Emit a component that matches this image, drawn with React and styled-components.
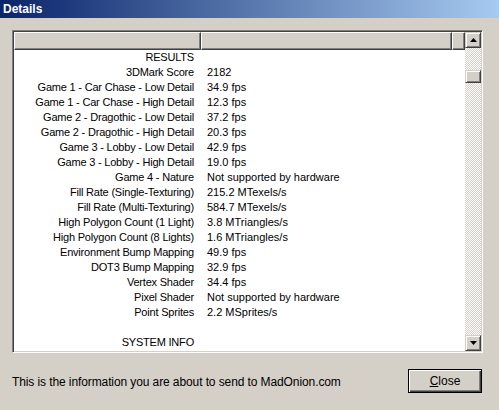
import React from 'react';
import styled, { createGlobalStyle } from 'styled-components';

const GlobalStyle = createGlobalStyle`
  html, body {
    margin: 0;
    padding: 0;
    background: #d4d0c8;
  }
  body {
    font-family: "Liberation Sans", Arial, sans-serif;
    color: #000;
  }
`;

const rows = [
  ['RESULTS', ''],
  ['3DMark Score', '2182'],
  ['Game 1 - Car Chase - Low Detail', '34.9 fps'],
  ['Game 1 - Car Chase - High Detail', '12.3 fps'],
  ['Game 2 - Dragothic - Low Detail', '37.2 fps'],
  ['Game 2 - Dragothic - High Detail', '20.3 fps'],
  ['Game 3 - Lobby - Low Detail', '42.9 fps'],
  ['Game 3 - Lobby - High Detail', '19.0 fps'],
  ['Game 4 - Nature', 'Not supported by hardware'],
  ['Fill Rate (Single-Texturing)', '215.2 MTexels/s'],
  ['Fill Rate (Multi-Texturing)', '584.7 MTexels/s'],
  ['High Polygon Count (1 Light)', '3.8 MTriangles/s'],
  ['High Polygon Count (8 Lights)', '1.6 MTriangles/s'],
  ['Environment Bump Mapping', '49.9 fps'],
  ['DOT3 Bump Mapping', '32.9 fps'],
  ['Vertex Shader', '34.4 fps'],
  ['Pixel Shader', 'Not supported by hardware'],
  ['Point Sprites', '2.2 MSprites/s'],
  ['', ''],
  ['SYSTEM INFO', ''],
];

const Window = styled.div`
  width: 499px;
  height: 410px;
  display: flex;
  flex-direction: column;
  background: #d4d0c8;
  overflow: hidden;
`;

const TitleBar = styled.div`
  height: 18px;
  flex: none;
  display: flex;
  align-items: center;
  padding-left: 3px;
  background: linear-gradient(to right, #0a246a, #a6caf0);
  color: #fff;
  font-weight: bold;
  font-size: 12px;
`;

const Body = styled.div`
  flex: 1;
  display: flex;
  flex-direction: column;
  padding: 12px 16px 0 12px;
`;

const ListFrame = styled.div`
  height: 319px;
  display: flex;
  border: 1px solid;
  border-color: #808080 #fff #fff #808080;
  box-shadow: inset 1px 1px #404040, inset -1px -1px #d4d0c8;
  padding: 1px;
  background: #fff;
`;

const ListArea = styled.div`
  flex: 1;
  display: flex;
  flex-direction: column;
  overflow: hidden;
`;

const HeaderRow = styled.div`
  display: flex;
  height: 18px;
  flex: none;
`;

const HeaderCell = styled.div`
  box-sizing: border-box;
  width: ${p => p.w}px;
  flex: ${p => (p.grow ? 1 : 'none')};
  background: #d4d0c8;
  border: 1px solid;
  border-color: #fff #404040 #404040 #fff;
  box-shadow: inset -1px -1px #808080;
`;

const Row = styled.div`
  display: flex;
  height: 15px;
  align-items: center;
  font-size: 11px;
  line-height: 15px;
  white-space: nowrap;
`;

const Label = styled.div`
  width: 187px;
  box-sizing: border-box;
  padding-right: 7px;
  text-align: right;
  letter-spacing: -0.2px;
`;

const Value = styled.div`
  padding-left: 6px;
`;

const ScrollBar = styled.div`
  width: 16px;
  flex: none;
  display: flex;
  flex-direction: column;
  background-color: #d4d0c8;
  background-image: repeating-conic-gradient(#fff 0 25%, #d4d0c8 0 50%);
  background-size: 2px 2px;
`;

const ScrollButton = styled.div`
  box-sizing: border-box;
  width: 16px;
  height: ${p => p.h || 16}px;
  margin-top: ${p => p.mt || 0}px;
  flex: none;
  display: flex;
  align-items: center;
  justify-content: center;
  background: #d4d0c8;
  border: 1px solid;
  border-color: #d4d0c8 #404040 #404040 #d4d0c8;
  box-shadow: inset 1px 1px #fff, inset -1px -1px #808080;
`;

const Spacer = styled.div`
  flex: 1;
`;

const Footer = styled.div`
  flex: 1;
  display: flex;
  align-items: center;
  justify-content: space-between;
  padding-bottom: 1px;
`;

const Note = styled.div`
  font-size: 12px;
  margin-top: 1px;
  letter-spacing: -0.1px;
`;

const CloseButton = styled.button`
  box-sizing: border-box;
  width: 74px;
  height: 24px;
  margin-right: 1px;
  background: #d4d0c8;
  border: 1px solid #000;
  box-shadow: inset 1px 1px #fff, inset -1px -1px #404040, inset -2px -2px #808080;
  font-family: "Liberation Sans", Arial, sans-serif;
  font-size: 12px;
  color: #000;
  padding: 0;
  u {
    text-decoration: underline;
    text-underline-offset: 1px;
  }
`;

const Arrow = ({ down }) => (
  <svg width="7" height="4" viewBox="0 0 7 4">
    {down
      ? <polygon points="0,0 7,0 3.5,4" fill="#000" />
      : <polygon points="3.5,0 7,4 0,4" fill="#000" />}
  </svg>
);

export default function App() {
  return (
    <Window>
      <GlobalStyle />
      <TitleBar>Details</TitleBar>
      <Body>
        <ListFrame>
          <ListArea>
            <HeaderRow>
              <HeaderCell w={187} />
              <HeaderCell w={251} />
              <HeaderCell grow />
            </HeaderRow>
            {rows.map(([label, value], i) => (
              <Row key={i}>
                <Label>{label}</Label>
                <Value>{value}</Value>
              </Row>
            ))}
          </ListArea>
          <ScrollBar>
            <ScrollButton><Arrow /></ScrollButton>
            <ScrollButton h={13} mt={22} />
            <Spacer />
            <ScrollButton><Arrow down /></ScrollButton>
          </ScrollBar>
        </ListFrame>
        <Footer>
          <Note>This is the information you are about to send to MadOnion.com</Note>
          <CloseButton><u>C</u>lose</CloseButton>
        </Footer>
      </Body>
    </Window>
  );
}
